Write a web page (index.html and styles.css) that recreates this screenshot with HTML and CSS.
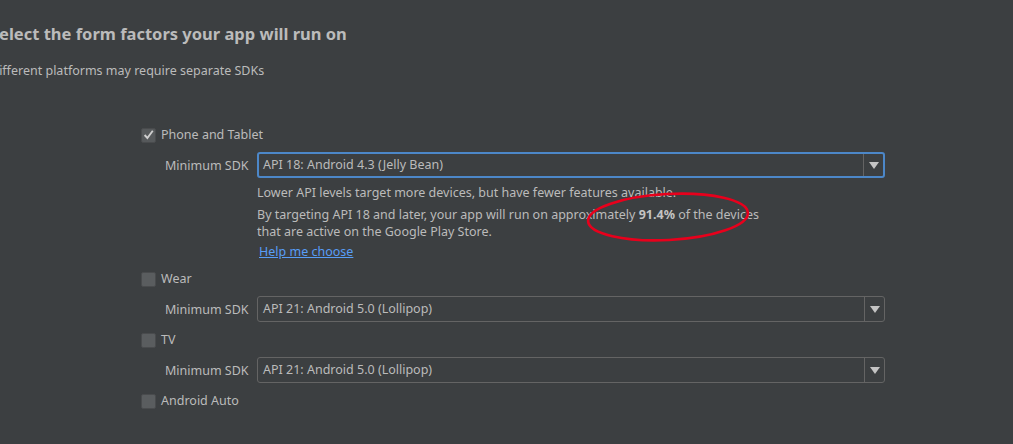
FILE: index.html
```html
<!DOCTYPE html>
<html>
<head>
<meta charset="utf-8">
<link rel="stylesheet" href="styles.css">
</head>
<body>
<div class="page">
  <div class="header">
    <h1 class="title">Select the form factors your app will run on</h1>
    <p class="subtitle">Different platforms may require separate SDKs</p>
  </div>
  <div class="form">
    <div class="check-row first">
      <span class="box checked"><svg width="14" height="14" viewBox="0 0 14 14"><path d="M2.8 7 L5.8 10.2 L11.6 2.4" fill="none" stroke="#cfcfcf" stroke-width="2"/></svg></span>
      <span class="check-label">Phone and Tablet</span>
    </div>
    <div class="sdk-row">
      <span class="sdk-label">Minimum SDK</span>
      <div class="select focused">
        <span class="select-text">API 18: Android 4.3 (Jelly Bean)</span>
        <span class="select-arrow"><span class="tri"></span></span>
      </div>
    </div>
    <div class="info">
      <div class="info-line l1">Lower API levels target more devices, but have fewer features available.</div>
      <div class="info-line l2">By targeting API 18 and later, your app will run on approximately <b>91.4%</b> of the devices</div>
      <div class="info-line l3">that are active on the Google Play Store.</div>
      <div class="info-line help"><a class="link" href="#">Help me choose</a></div>
      <svg class="ellipse" width="170" height="56" viewBox="0 0 170 56"><ellipse cx="85" cy="28" rx="80" ry="23" transform="rotate(-3 85 28)" fill="none" stroke="#e8001c" stroke-width="2.6"/></svg>
    </div>
    <div class="check-row">
      <span class="box"></span>
      <span class="check-label">Wear</span>
    </div>
    <div class="sdk-row">
      <span class="sdk-label">Minimum SDK</span>
      <div class="select">
        <span class="select-text">API 21: Android 5.0 (Lollipop)</span>
        <span class="select-arrow"><span class="tri"></span></span>
      </div>
    </div>
    <div class="check-row">
      <span class="box"></span>
      <span class="check-label">TV</span>
    </div>
    <div class="sdk-row">
      <span class="sdk-label">Minimum SDK</span>
      <div class="select">
        <span class="select-text">API 21: Android 5.0 (Lollipop)</span>
        <span class="select-arrow"><span class="tri"></span></span>
      </div>
    </div>
    <div class="check-row">
      <span class="box"></span>
      <span class="check-label">Android Auto</span>
    </div>
  </div>
</div>
</body>
</html>
```

FILE: styles.css
```css
html, body {
  margin: 0;
  padding: 0;
  background: #3c3f41;
}
body {
  width: 1013px;
  height: 444px;
  overflow: hidden;
  font-family: "Noto Sans", "Open Sans", sans-serif;
  color: #bbbbbb;
  font-size: 12.5px;
}
.header {
  margin-left: -10px;
}
.title {
  margin: 0;
  padding-top: 22px;
  font-size: 16.5px;
  line-height: 24px;
  font-weight: bold;
  color: #bbbbbb;
}
.subtitle {
  margin: 0;
  padding-top: 16px;
  font-size: 12.5px;
  line-height: 18px;
}
.form {
  margin-left: 141px;
  padding-top: 45px;
  display: flex;
  flex-direction: column;
}
.check-row {
  display: flex;
  align-items: center;
  height: 20px;
  margin-top: 8px;
}
.check-row.first { margin-top: 0; }
.box {
  box-sizing: border-box;
  width: 15px;
  height: 15px;
  border-radius: 2px;
  background: #5a5d5f;
  border: 1px solid #494b4d;
  display: flex;
  align-items: center;
  justify-content: center;
}
.box.checked { background: #56595b; }
.box svg { display: block; }
.check-label {
  margin-left: 5px;
  line-height: 20px;
}
.sdk-row {
  display: flex;
  align-items: center;
  margin-top: 7px;
  height: 26px;
}
.sdk-label {
  width: 116px;
  padding-left: 24px;
  box-sizing: border-box;
  flex: none;
}
.select {
  box-sizing: border-box;
  width: 628px;
  height: 26px;
  border: 1px solid #646464;
  border-radius: 3px;
  display: flex;
  align-items: center;
  background: #3c3f41;
}
.select.focused {
  border: 2px solid #4c87c8;
}
.select-text {
  flex: 1;
  padding-left: 5px;
  line-height: 20px;
}
.select.focused .select-text { padding-left: 4px; }
.select-arrow {
  width: 19px;
  height: 100%;
  border-left: 1px solid #646464;
  display: flex;
  align-items: center;
  justify-content: center;
}
.tri {
  width: 0;
  height: 0;
  border-left: 5px solid transparent;
  border-right: 5px solid transparent;
  border-top: 7px solid #c4c4c4;
  margin-top: 1px;
}
.info {
  position: relative;
  margin-left: 116px;
  padding-top: 6px;
}
.info-line {
  line-height: 18px;
}
.info-line.l2 { margin-top: 4px; line-height: 17px; }
.info-line.l3 { line-height: 17px; }
.info-line.help { margin-top: 3px; padding-left: 2px; }
.info b { font-weight: bold; color: #c4c4c4; }
.link {
  color: #589df6;
  text-decoration: underline;
}
.ellipse {
  position: absolute;
  left: 326px;
  top: 11px;
}
```
